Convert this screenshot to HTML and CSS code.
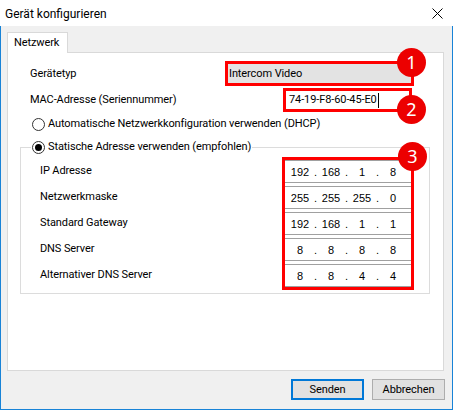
FILE: index.html
```html
<!DOCTYPE html>
<html lang="de">
<head>
<meta charset="utf-8">
<title>Gerät konfigurieren</title>
<link rel="stylesheet" href="styles.css">
</head>
<body>
<div class="window">
  <div class="titlebar">
    <span class="title">Gerät konfigurieren</span>
    <svg class="close" width="11" height="11" viewBox="0 0 11 11"><path d="M0.5 0.5 L10.5 10.5 M10.5 0.5 L0.5 10.5" stroke="#000" stroke-width="1" fill="none"/></svg>
  </div>
  <div class="frame">
    <div class="tabs"><div class="tab">Netzwerk</div></div>
    <div class="panel">
      <div class="row row-type">
        <span class="label w-type">Gerätetyp</span>
        <div class="mark mark-type">
          <div class="field-ro">Intercom Video</div>
          <span class="badge badge-1">1</span>
        </div>
      </div>
      <div class="row row-mac">
        <span class="label w-mac">MAC-Adresse (Seriennummer)</span>
        <div class="mark mark-mac">
          <div class="field-edit">74-19-F8-60-45-E0<span class="caret"></span></div>
          <span class="badge badge-2">2</span>
        </div>
      </div>
      <div class="row radio-row">
        <span class="radio"></span>
        <span class="radio-text">Automatische Netzwerkkonfiguration verwenden (DHCP)</span>
      </div>
      <fieldset class="group">
        <legend class="legend"><span class="radio checked"></span><span class="radio-text">Statische Adresse verwenden (empfohlen)</span></legend>
        <div class="group-body">
          <div class="ip-labels">
            <div class="ip-label">IP Adresse</div>
            <div class="ip-label">Netzwerkmaske</div>
            <div class="ip-label">Standard Gateway</div>
            <div class="ip-label">DNS Server</div>
            <div class="ip-label">Alternativer DNS Server</div>
          </div>
          <div class="mark mark-ip">
            <div class="ip"><span class="oct">192</span><span class="dot">.</span><span class="oct">168</span><span class="dot">.</span><span class="oct">1</span><span class="dot">.</span><span class="oct">8</span></div>
            <div class="ip"><span class="oct">255</span><span class="dot">.</span><span class="oct">255</span><span class="dot">.</span><span class="oct">255</span><span class="dot">.</span><span class="oct">0</span></div>
            <div class="ip"><span class="oct">192</span><span class="dot">.</span><span class="oct">168</span><span class="dot">.</span><span class="oct">1</span><span class="dot">.</span><span class="oct">1</span></div>
            <div class="ip"><span class="oct">8</span><span class="dot">.</span><span class="oct">8</span><span class="dot">.</span><span class="oct">8</span><span class="dot">.</span><span class="oct">8</span></div>
            <div class="ip"><span class="oct">8</span><span class="dot">.</span><span class="oct">8</span><span class="dot">.</span><span class="oct">4</span><span class="dot">.</span><span class="oct">4</span></div>
            <span class="badge badge-3">3</span>
          </div>
        </div>
      </fieldset>
    </div>
    <div class="buttons">
      <button class="btn btn-default">Senden</button>
      <button class="btn">Abbrechen</button>
    </div>
  </div>
</div>
</body>
</html>
```
FILE: styles.css
```css
* { box-sizing: border-box; }
html, body { margin: 0; padding: 0; }
body {
  width: 453px;
  height: 410px;
  overflow: hidden;
  font-family: Roboto, Lato, sans-serif;
  font-size: 11px;
  letter-spacing: -0.1px;
  color: #000;
}
.window {
  width: 453px;
  height: 410px;
  display: flex;
  flex-direction: column;
}
.titlebar {
  height: 26px;
  background: #fff;
  display: flex;
  align-items: center;
  justify-content: space-between;
  padding: 0 10px 0 5px;
}
.title { font-size: 12px; letter-spacing: 0; line-height: 16px; margin-top: 1px; }
.close { display: block; margin-top: 1px; }
.frame {
  flex: 1;
  background: #f0f0f0;
  border: 1px solid #1883d7;
  border-top: none;
  padding: 6px 7px 0 6px;
  display: flex;
  flex-direction: column;
}
.tabs { display: flex; height: 21px; position: relative; z-index: 1; margin-bottom: -1px; }
.tab {
  width: 61px;
  height: 21px;
  background: #fff;
  border: 1px solid #d9d9d9;
  border-bottom: none;
  padding-left: 6px;
  line-height: 20px;
  white-space: nowrap;
}
.panel {
  width: 437px;
  height: 319px;
  background: #fff;
  border: 1px solid #d9d9d9;
  display: flex;
  flex-direction: column;
}
.row { display: flex; align-items: center; }
.label { line-height: 16px; white-space: nowrap; }
.row-type { margin-top: 8px; padding-left: 22px; }
.w-type { width: 195px; }
.row-mac { margin-top: 2px; padding-left: 22px; }
.w-mac { width: 253px; }
.mark { position: relative; border: 3px solid #f00; }
.mark-type { width: 189px; height: 25px; }
.mark-mac { width: 129px; height: 24px; }
.field-ro {
  height: 100%;
  background: #e3e3e3;
  padding-left: 1px;
  line-height: 19px;
}
.field-edit {
  height: 100%;
  background: #fff;
  padding-left: 3px;
  line-height: 18px;
  display: flex;
  align-items: center;
}
.caret { display: inline-block; width: 1px; height: 15px; background: #000; margin-left: 1px; }
.radio-row { margin-top: 5px; padding-left: 24px; height: 14px; }
.radio {
  display: inline-block;
  width: 13px;
  height: 13px;
  border: 1px solid #333;
  border-radius: 50%;
  background: #fff;
  position: relative;
  flex: none;
}
.radio.checked::after {
  content: "";
  position: absolute;
  left: 2px; top: 2px;
  width: 7px; height: 7px;
  border-radius: 50%;
  background: #000;
}
.radio-text { margin-left: 3px; line-height: 14px; white-space: nowrap; }
.group {
  margin: 9px 0 0 12px;
  width: 410px;
  border: 1px solid #dcdcdc;
  padding: 0 0 3px 0;
  min-width: 0;
}
.legend {
  margin-left: 10px;
  padding: 0 1px;
  display: flex;
  align-items: center;
  height: 14px;
}
.group-body { display: flex; margin-top: 3px; }
.ip-labels { width: 261px; padding: 2px 0 0 19px; }
.ip-label { height: 26px; line-height: 23px; }
.mark-ip { width: 132px; display: flex; flex-direction: column; gap: 3px; }
.ip {
  height: 23px;
  border-top: 1px solid #a0a0a0;
  border-bottom: 1px solid #a0a0a0;
  background: #fff;
  display: flex;
  align-items: center;
  padding-left: 3px;
  font-family: "Liberation Sans", Arial, sans-serif;
  font-size: 11px;
  letter-spacing: 0;
}
.oct { width: 24px; text-align: center; }
.dot { width: 7px; text-align: center; }
.badge {
  position: absolute;
  width: 29px;
  height: 29px;
  border-radius: 50%;
  background: #ec0000;
  color: #fff;
  font-family: "Noto Sans", sans-serif;
  font-size: 18px;
  letter-spacing: 0;
  line-height: 29px;
  text-align: center;
  z-index: 2;
}
.badge-1 { left: 169px; top: -16px; }
.badge-2 { left: 111px; top: 4px; }
.badge-3 { left: 113px; top: -18px; }
.buttons {
  display: flex;
  justify-content: flex-end;
  gap: 8px;
  margin-top: 8px;
}
.btn {
  width: 73px;
  height: 21px;
  background: #e1e1e1;
  border: 1px solid #adadad;
  font-family: Roboto, Lato, sans-serif;
  font-size: 11px;
  letter-spacing: -0.1px;
  padding: 0;
  color: #000;
}
.btn-default { border: 2px solid #0078d7; }
```
